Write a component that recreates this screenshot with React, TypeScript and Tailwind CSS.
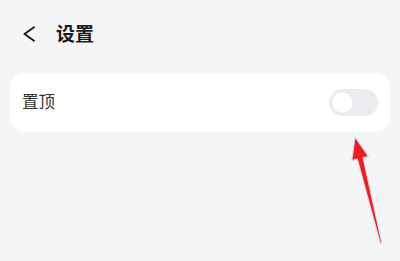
export default function App() {
  return (
    <div
      className="relative h-[261px] w-[400px] overflow-hidden bg-[#f4f5f7]"
      style={{ fontFamily: '"Noto Sans", "Noto Sans CJK SC", sans-serif' }}
    >
      <header className="flex h-[68px] items-center pl-[23px]">
        <svg width="12" height="16" viewBox="0 0 12 16" fill="none" aria-hidden>
          <path d="M11 1.2 L1.5 8 L11 14.8" stroke="#1a1a1a" strokeWidth="1.9" strokeLinecap="round" strokeLinejoin="round" />
        </svg>
        <h1 className="ml-[21px] text-[19px] font-semibold leading-none text-[#1a1a1a]">设置</h1>
      </header>

      <section className="mx-[10px] mt-[5px] flex h-[59px] items-center justify-between rounded-[14px] bg-white pl-[12px] pr-[12px]">
        <span className="text-[16.5px] leading-none text-[#333333]">置顶</span>
        <button
          type="button"
          aria-label="置顶开关"
          className="flex h-[27px] w-[49px] items-center rounded-full bg-[#ebecef] p-[3px]"
        >
          <span className="h-[21px] w-[21px] rounded-full bg-white shadow-[0_0_1px_rgba(0,0,0,0.15)]" />
        </button>
      </section>

      <svg className="pointer-events-none absolute left-0 top-0" width="400" height="261" viewBox="0 0 400 261" aria-hidden>
        <polygon
          points="355,137 368.5,156.5 363.1,157.7 381.8,242.8 380.2,243.2 357.3,159.1 351.8,160.5"
          fill="#ec1c24"
          stroke="#d9d9d9"
          strokeWidth="1.2"
          strokeLinejoin="round"
        />
      </svg>
    </div>
  );
}
